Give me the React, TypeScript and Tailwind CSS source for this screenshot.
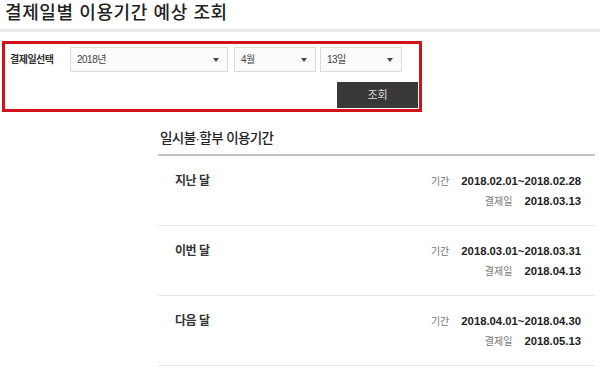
import React from "react";

const font = { fontFamily: '"Liberation Sans", "Noto Sans CJK KR", sans-serif' };

function Select({ label, w }: { label: string; w: string }) {
  return (
    <div className={`${w} h-[25px] border border-[#dcdcdc] bg-[#fbfbfb] flex items-center justify-between pl-[6px] pr-[8px]`}>
      <span className="text-[10px] text-[#444] tracking-[-0.5px]">{label}</span>
      <span className="w-0 h-0 border-l-[3px] border-r-[3px] border-t-[4px] border-l-transparent border-r-transparent border-t-[#444]" />
    </div>
  );
}

function Row({ name, period, pay }: { name: string; period: string; pay: string }) {
  return (
    <div className="h-[70px] border-b border-[#e6e6e6] flex justify-between pl-[17px] pr-[14px] pt-[17px]">
      <div className="text-[12px] font-bold text-[#333] tracking-[-0.5px] leading-[16px]">{name}</div>
      <div className="flex flex-col items-end gap-[4px]">
        <div className="flex items-baseline h-[16px] leading-[16px]">
          <span className="text-[10px] text-[#777] mr-[12px]">기간</span>
          <span className="text-[11.3px] font-bold text-[#222]">{period}</span>
        </div>
        <div className="flex items-baseline h-[16px] leading-[16px]">
          <span className="text-[10px] text-[#777] mr-[12px]">결제일</span>
          <span className="text-[11.3px] font-bold text-[#222]">{pay}</span>
        </div>
      </div>
    </div>
  );
}

export default function App() {
  return (
    <div className="w-[600px] h-[370px] bg-white overflow-hidden" style={font}>
      <div className="h-[29px] pl-[5px] pt-[2px] text-[18px] font-medium text-[#222] tracking-[0.6px] leading-[22px]">
        결제일별 이용기간 예상 조회
      </div>
      <div className="h-[3px] bg-[#e9e9e9]" />
      <div className="mt-[9px] ml-[2px] w-[420px] h-[71px] border-[3px] border-[#d2121b] pt-[3px] pl-[5px] pr-[1px]">
        <div className="flex items-center">
          <div className="w-[60px] text-[10px] font-bold text-[#333] tracking-[-0.5px]">결제일선택</div>
          <Select label="2018년" w="w-[158px]" />
          <div className="w-[6px]" />
          <Select label="4월" w="w-[82px]" />
          <div className="w-[4px]" />
          <Select label="13일" w="w-[82px]" />
        </div>
        <div className="flex justify-end mt-[10px]">
          <div className="w-[81px] h-[26px] bg-[#383838] text-[#dedede] text-[11px] flex items-center justify-center">
            조회
          </div>
        </div>
      </div>
      <div className="ml-[158px] mr-[5px] mt-[17px]">
        <div className="h-[25px] pl-[2px] text-[13.5px] font-medium text-[#222] tracking-[-0.6px] leading-[20px]">
          일시불·할부 이용기간
        </div>
        <div className="h-[2px] bg-[#c4c4c4]" />
        <Row name="지난 달" period="2018.02.01~2018.02.28" pay="2018.03.13" />
        <Row name="이번 달" period="2018.03.01~2018.03.31" pay="2018.04.13" />
        <Row name="다음 달" period="2018.04.01~2018.04.30" pay="2018.05.13" />
      </div>
    </div>
  );
}
